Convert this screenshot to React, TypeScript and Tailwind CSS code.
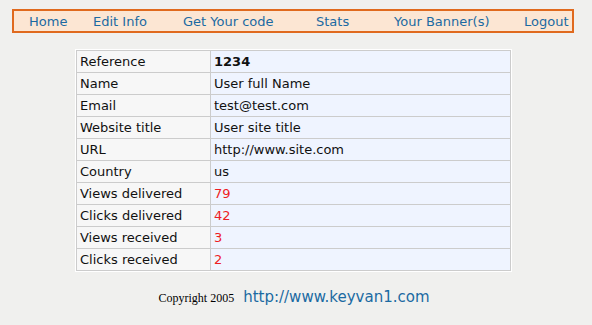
const navItems = [
    { label: 'Home', w: 'w-[64px]' },
    { label: 'Edit Info', w: 'w-[90px]' },
    { label: 'Get Your code', w: 'w-[133px]' },
    { label: 'Stats', w: 'w-[78px]' },
    { label: 'Your Banner(s)', w: 'w-[130px]' },
    { label: 'Logout', w: 'w-auto' },
];

const rows: { label: string; value: string; kind?: 'bold' | 'red' }[] = [
    { label: 'Reference', value: '1234', kind: 'bold' },
    { label: 'Name', value: 'User full Name' },
    { label: 'Email', value: 'test@test.com' },
    { label: 'Website title', value: 'User site title' },
    { label: 'URL', value: 'http://www.site.com' },
    { label: 'Country', value: 'us' },
    { label: 'Views delivered', value: '79', kind: 'red' },
    { label: 'Clicks delivered', value: '42', kind: 'red' },
    { label: 'Views received', value: '3', kind: 'red' },
    { label: 'Clicks received', value: '2', kind: 'red' },
];

const App = () => {
    return (
        <div className="min-h-[325px] w-full bg-[#f0f0ee] pt-[9px] font-['DejaVu_Sans',Verdana,sans-serif] text-[13px]">
            {/* top menu */}
            <nav className="mx-[12px] flex h-[24px] w-[562px] items-center border-2 border-[#e06a1e] bg-[#fce6d3] pl-[15px] text-[#1b6aa2]">
                {navItems.map((item) => (
                    <a key={item.label} href="#" className={`${item.w} shrink-0 whitespace-nowrap leading-none`}>
                        {item.label}
                    </a>
                ))}
            </nav>

            {/* account details */}
            <div className="ml-[75px] mt-[16px] w-[437px] border border-white">
                <table className="w-full border-collapse">
                    <tbody>
                        {rows.map((row) => (
                            <tr key={row.label} className="h-[22px]">
                                <td className="w-[134px] border border-[#cccccc] bg-[#f7f7f7] px-[3px] py-0 leading-none text-[#111111]">
                                    {row.label}
                                </td>
                                <td
                                    className={
                                        'border border-[#cccccc] bg-[#eff4ff] px-[3px] py-0 leading-none ' +
                                        (row.kind === 'red'
                                            ? 'text-[#ee1c24]'
                                            : row.kind === 'bold'
                                              ? 'font-bold text-[#111111]'
                                              : 'text-[#111111]')
                                    }
                                >
                                    {row.value}
                                </td>
                            </tr>
                        ))}
                    </tbody>
                </table>
            </div>

            {/* footer */}
            <div className="mt-[14px] flex items-baseline justify-center gap-[9px] pr-[4px]">
                <span className="font-['Liberation_Serif',serif] text-[12px] text-black">Copyright 2005</span>
                <a href="#" className="text-[15px] text-[#1b6aa2]">
                    http://www.keyvan1.com
                </a>
            </div>
        </div>
    );
};

export default App;
